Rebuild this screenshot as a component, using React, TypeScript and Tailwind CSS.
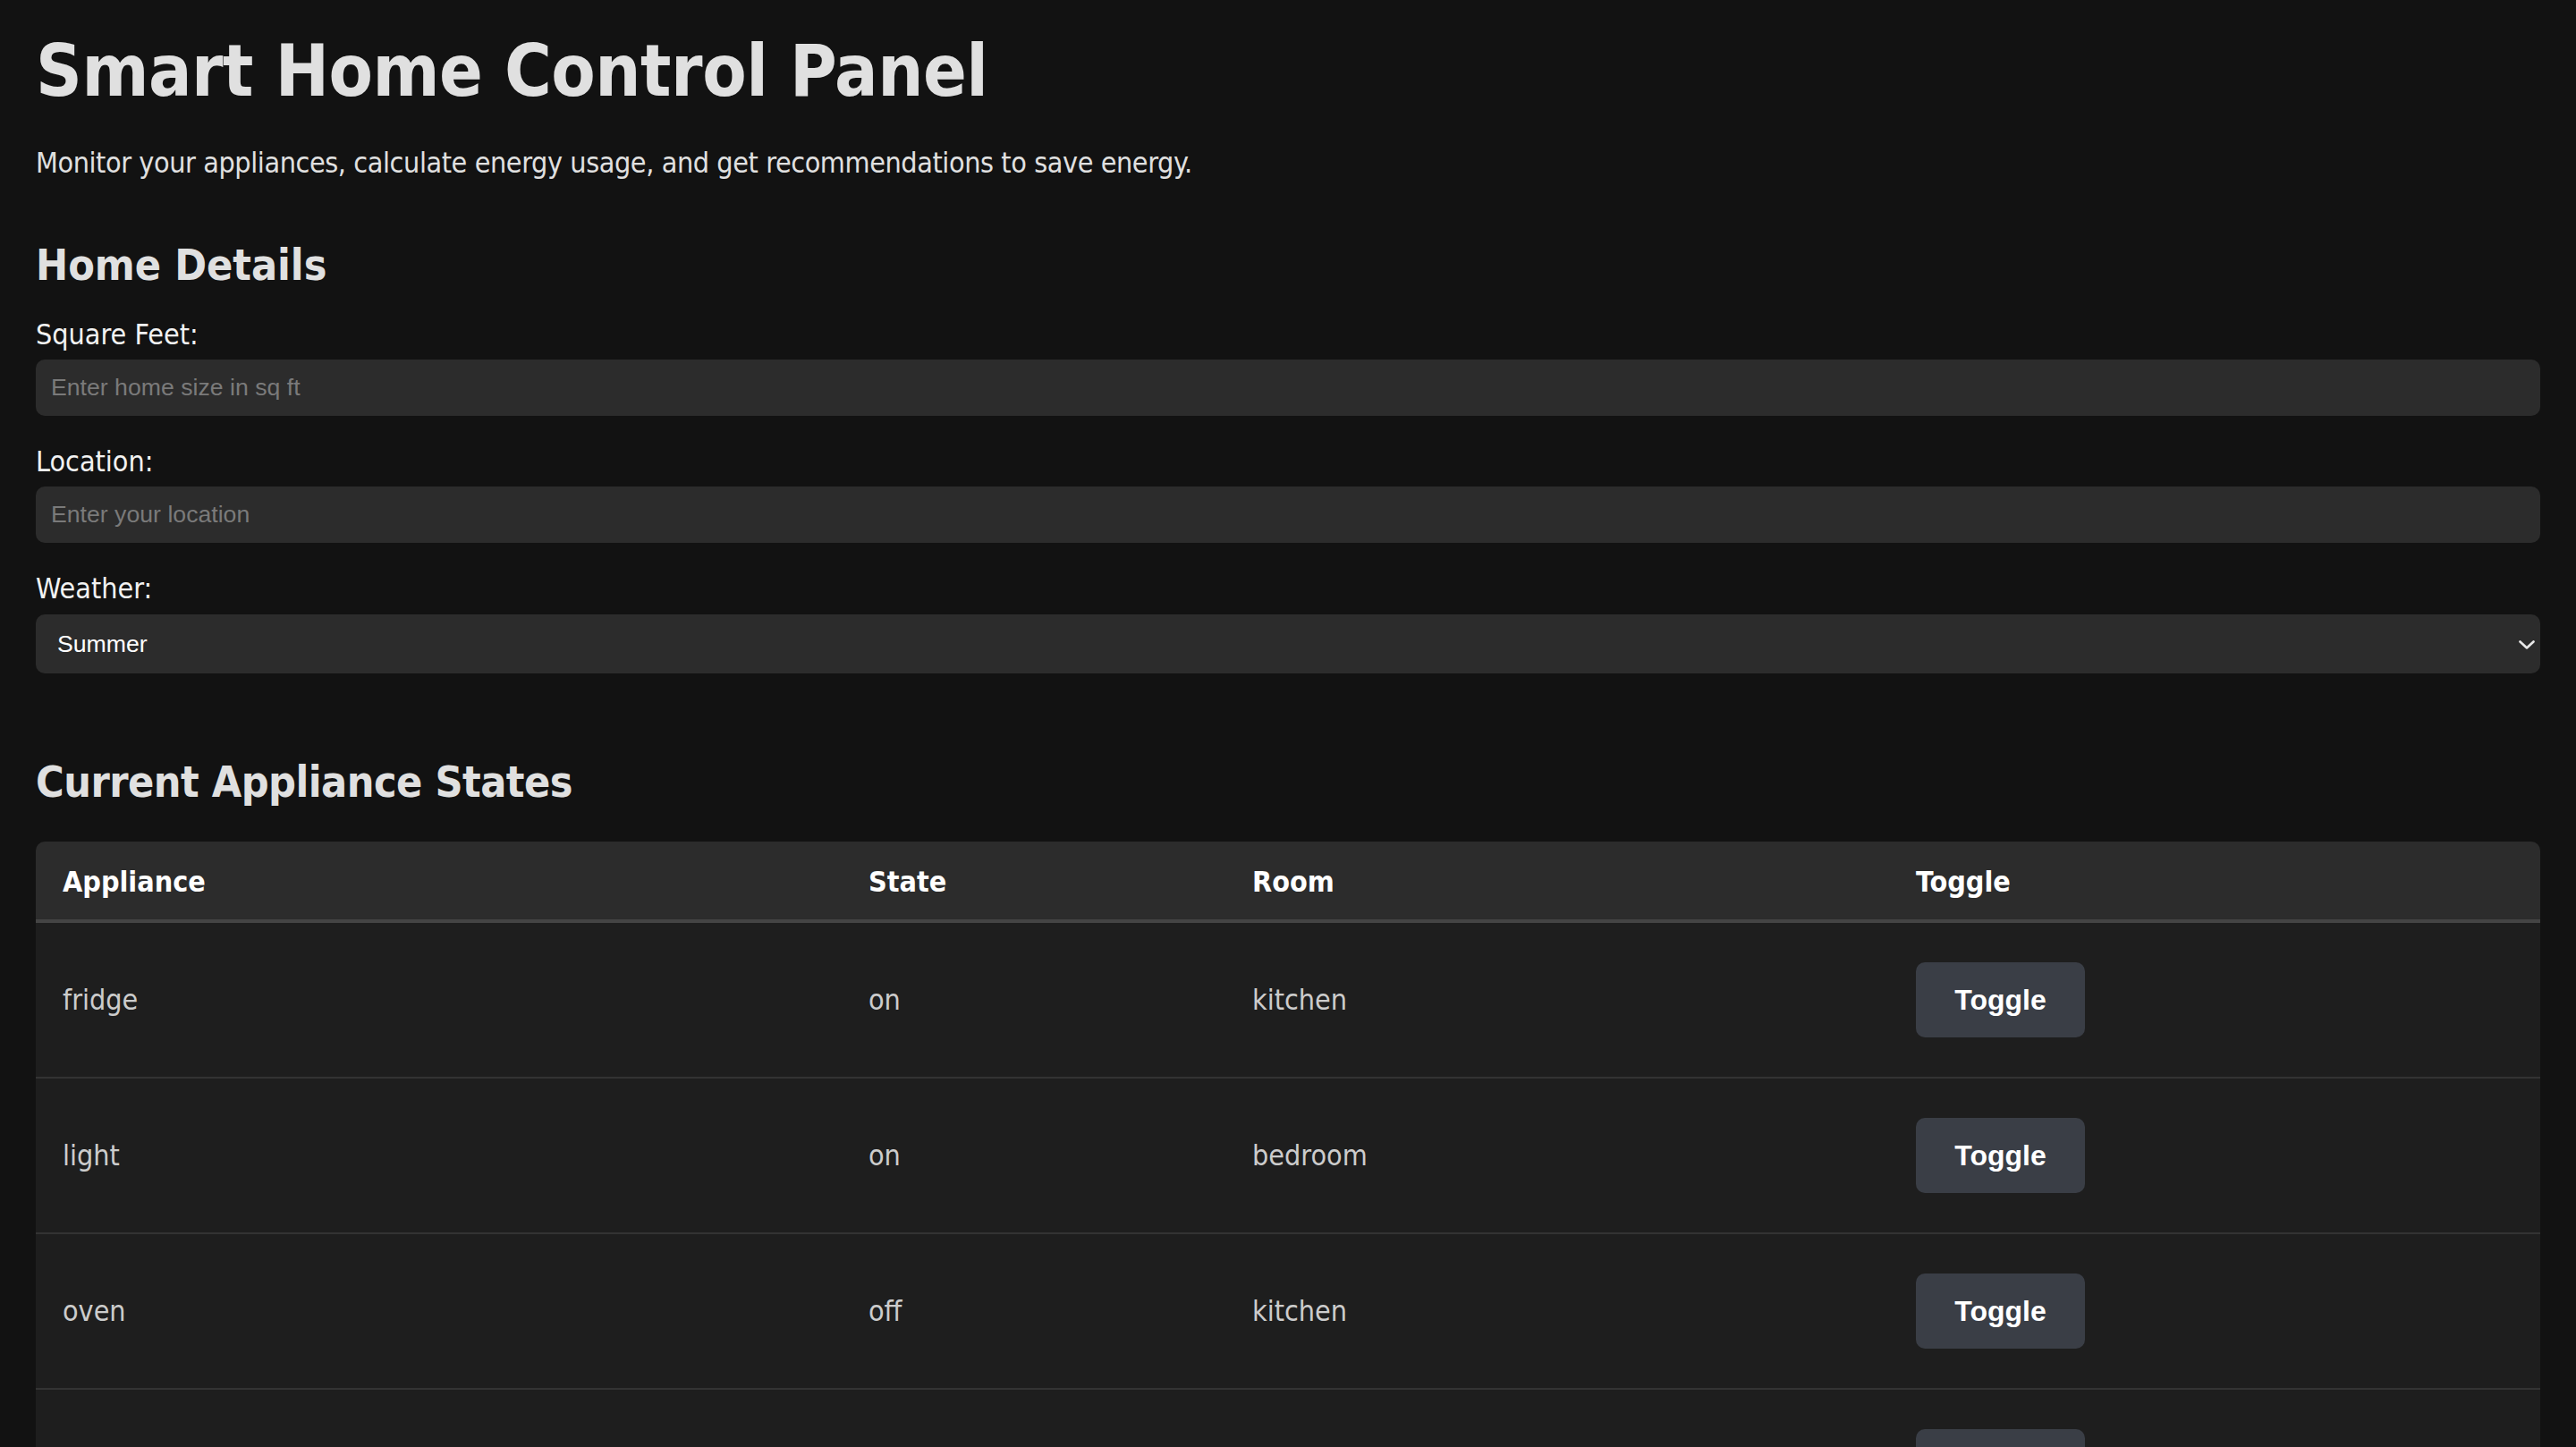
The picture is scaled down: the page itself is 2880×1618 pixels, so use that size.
import { useState } from "react";

type Appliance = {
  name: string;
  state: "on" | "off";
  room: string;
};

const INITIAL: Appliance[] = [
  { name: "fridge", state: "on", room: "kitchen" },
  { name: "light", state: "on", room: "bedroom" },
  { name: "oven", state: "off", room: "kitchen" },
  { name: "tv", state: "off", room: "living room" },
];

const FONT = "font-['DejaVu_Sans_Condensed','DejaVu_Sans',sans-serif]";

function Field({ label, children }: { label: string; children: React.ReactNode }) {
  return (
    <div className="flex flex-col">
      <label className="text-[32px] leading-[40px] text-[#f2f2f2]">{label}</label>
      {children}
    </div>
  );
}

export default function App() {
  const [appliances, setAppliances] = useState<Appliance[]>(INITIAL);
  const [weather, setWeather] = useState("summer");

  function toggle(i: number) {
    setAppliances((prev) =>
      prev.map((a, idx) =>
        idx === i ? { ...a, state: a.state === "on" ? "off" : "on" } : a
      )
    );
  }

  return (
    <div className={`min-h-screen bg-[#121212] px-[40px] pt-[32px] pb-[80px] text-[#e0e0e0] ${FONT}`}>
      <h1 className="text-[80px] leading-[96px] font-bold tracking-[-0.45px] text-[#e0e0e0]">
        Smart Home Control Panel
      </h1>
      <p className="mt-[34px] text-[32px] leading-[40px] tracking-[-0.4px] text-[#e0e0e0]">
        Monitor your appliances, calculate energy usage, and get recommendations to save energy.
      </p>

      {/* Home details */}
      <h2 className="mt-[66px] text-[48px] leading-[56px] font-bold text-[#e0e0e0]">
        Home Details
      </h2>
      <div className="mt-[30px] flex flex-col gap-[31px]">
        <Field label="Square Feet:">
          <input
            type="number"
            placeholder="Enter home size in sq ft"
            className="mt-[8px] h-[63px] w-full rounded-[10px] bg-[#2c2c2c] px-[17px] font-['Liberation_Sans',Arial,sans-serif] text-[26.67px] text-white placeholder:text-[#7a7a7a] outline-none"
          />
        </Field>
        <Field label="Location:">
          <input
            type="text"
            placeholder="Enter your location"
            className="mt-[8px] h-[63px] w-full rounded-[10px] bg-[#2c2c2c] px-[17px] font-['Liberation_Sans',Arial,sans-serif] text-[26.67px] text-white placeholder:text-[#7a7a7a] outline-none"
          />
        </Field>
        <Field label="Weather:">
          <div className="relative mt-[9px]">
            <select
              value={weather}
              onChange={(e) => setWeather(e.target.value)}
              className="h-[66px] w-full appearance-none rounded-[10px] bg-[#2c2c2c] px-[24px] font-['Liberation_Sans',Arial,sans-serif] text-[26.67px] text-white outline-none"
            >
              <option value="summer">Summer</option>
              <option value="winter">Winter</option>
              <option value="spring">Spring</option>
              <option value="fall">Fall</option>
            </select>
            <svg
              width="18"
              height="10"
              viewBox="0 0 18 10"
              fill="none"
              className="pointer-events-none absolute right-[6px] top-[29px]"
            >
              <path d="M1.5 1.5l7.5 7 7.5-7" stroke="#e8e8e8" strokeWidth="2.6" strokeLinecap="round" strokeLinejoin="round" />
            </svg>
          </div>
        </Field>
      </div>

      {/* Appliance table */}
      <h2 className="mt-[93px] text-[48px] leading-[56px] font-bold tracking-[-0.5px] text-[#e0e0e0]">
        Current Appliance States
      </h2>
      <div className="mt-[39px] overflow-hidden rounded-t-[10px]">
        <table className="w-full table-fixed border-collapse text-left">
          <colgroup>
            <col className="w-[901px]" />
            <col className="w-[429px]" />
            <col className="w-[742px]" />
            <col className="w-[728px]" />
          </colgroup>
          <thead>
            <tr className="bg-[#2c2c2c] border-b-[4px] border-[#444444]">
              {["Appliance", "State", "Room", "Toggle"].map((h) => (
                <th
                  key={h}
                  className="px-[30px] pt-[25px] pb-[22px] text-[32px] leading-[40px] font-bold text-white"
                >
                  {h}
                </th>
              ))}
            </tr>
          </thead>
          <tbody>
            {appliances.map((a, i) => (
              <tr key={a.name} className="bg-[#1e1e1e] border-b-[2px] border-[#333333]">
                <td className="px-[30px] py-[44px] text-[32px] leading-[40px] text-[#cccccc] align-middle">{a.name}</td>
                <td className="px-[30px] py-[44px] text-[32px] leading-[40px] text-[#cccccc] align-middle">{a.state}</td>
                <td className="px-[30px] py-[44px] text-[32px] leading-[40px] text-[#cccccc] align-middle">{a.room}</td>
                <td className="px-[30px] py-[44px] align-middle">
                  <button
                    onClick={() => toggle(i)}
                    className="h-[84px] w-[189px] rounded-[10px] bg-[#3a3e46] font-['Liberation_Sans',Arial,sans-serif] text-[32px] font-bold text-white hover:bg-[#454a53]"
                  >
                    Toggle
                  </button>
                </td>
              </tr>
            ))}
          </tbody>
        </table>
      </div>
    </div>
  );
}
